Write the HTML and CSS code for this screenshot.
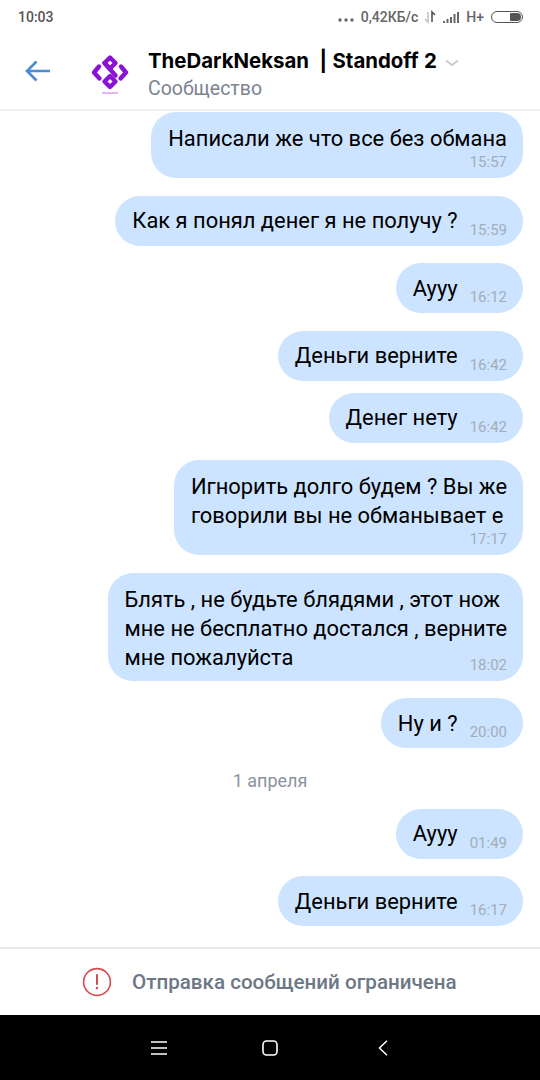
FILE: index.html
```html
<!DOCTYPE html>
<html lang="ru">
<head>
    <meta charset="UTF-8">
    <meta name="viewport" content="width=device-width, initial-scale=1.0">
    <title>TheDarkNeksan | Standoff 2</title>
    <link rel="stylesheet" href="styles.css">
</head>
<body>
    <div class="phone">
        <div class="status-bar">
            <span class="clock">10:03</span>
            <div class="status-right">
                <svg class="dots" width="16" height="4" viewBox="0 0 16 4">
                    <circle cx="2" cy="2" r="1.700" fill="#666"/>
                    <circle cx="8" cy="2" r="1.700" fill="#666"/>
                    <circle cx="14" cy="2" r="1.700" fill="#666"/>
                </svg>
                <span>0,42КБ/с</span>
                <svg class="traffic" width="13" height="14" viewBox="0 0 13 14">
                    <path d="M4 2v10L1 9" fill="none" stroke="#c4c4c4" stroke-width="1.600"/>
                    <path d="M8 12V2l3 3" fill="none" stroke="#555" stroke-width="1.600"/>
                </svg>
                <svg class="signal" width="18" height="12" viewBox="0 0 18 12">
                    <rect x="0" y="10" width="2" height="2" fill="#666"/>
                    <rect x="3.500" y="8" width="2" height="4" fill="#666"/>
                    <rect x="7" y="6" width="2" height="6" fill="#666"/>
                    <rect x="10.500" y="3" width="2" height="9" fill="#666"/>
                    <rect x="14" y="1" width="2" height="11" fill="#666"/>
                </svg>
                <span class="net">H+</span>
                <div class="battery"><div class="battery-fill"></div></div>
            </div>
        </div>

        <div class="header">
            <svg class="back" width="26" height="22" viewBox="0 0 26 22">
                <path d="M25 11H2M11.500 1.500L2 11l9.500 9.500" fill="none" stroke="#4a8bd4" stroke-width="2.600"/>
            </svg>
            <svg class="logo" width="44" height="44" viewBox="0 0 44 44">
                <g fill="none" stroke="#8a12d6" stroke-width="4.400" stroke-linejoin="round" stroke-linecap="round">
                    <path d="M22 6.500l5.500 5.500-5.500 5.500-5.500-5.500z"/>
                    <path d="M22 25l5.500 5.500-5.500 5.500-5.500-5.500z"/>
                    <path d="M16.500 12L27.500 24.500"/>
                    <path d="M11 15.500L6 21.500l5.500 6"/>
                    <path d="M33 15.500l5 6-5.500 6"/>
                </g>
                <path d="M14 42h16" stroke="#c86fe8" stroke-width="1"/>
            </svg>
            <div class="title-block">
                <div class="title-row">
                    <span class="title">TheDarkNeksan&nbsp; | Standoff 2</span>
                    <svg class="chevron" width="14" height="8" viewBox="0 0 14 8">
                        <path d="M1 1.500l6 4.500 6-4.500" fill="none" stroke="#c5cad1" stroke-width="1.800"/>
                    </svg>
                </div>
                <div class="subtitle">Сообщество</div>
            </div>
        </div>

        <div class="messages">
            <div class="bubble stacked">
                <div class="text">Написали же что все без обмана</div>
                <div class="time">15:57</div>
            </div>
            <div class="bubble">
                <div class="text">Как я понял денег я не получу ?</div>
                <div class="time">15:59</div>
            </div>
            <div class="bubble">
                <div class="text">Аууу</div>
                <div class="time">16:12</div>
            </div>
            <div class="bubble">
                <div class="text">Деньги верните</div>
                <div class="time">16:42</div>
            </div>
            <div class="bubble grouped">
                <div class="text">Денег нету</div>
                <div class="time">16:42</div>
            </div>
            <div class="bubble stacked">
                <div class="text">Игнорить долго будем ? Вы же<br>говорили вы не обманывает е</div>
                <div class="time">17:17</div>
            </div>
            <div class="bubble stacked">
                <div class="text">Блять , не будьте блядями , этот нож<br>мне не бесплатно достался , верните<br>мне пожалуйста</div>
                <div class="time time-inline">18:02</div>
            </div>
            <div class="bubble">
                <div class="text">Ну и ?</div>
                <div class="time">20:00</div>
            </div>
            <div class="date">1 апреля</div>
            <div class="bubble">
                <div class="text">Аууу</div>
                <div class="time">01:49</div>
            </div>
            <div class="bubble">
                <div class="text">Деньги верните</div>
                <div class="time">16:17</div>
            </div>
        </div>

        <div class="footer">
            <svg class="warn" width="30" height="30" viewBox="0 0 30 30">
                <circle cx="15" cy="15" r="13.400" fill="none" stroke="#d9484d" stroke-width="1.600"/>
                <path d="M15 8v9" stroke="#d9484d" stroke-width="2" stroke-linecap="round"/>
                <circle cx="15" cy="21" r="1.200" fill="#d9484d"/>
            </svg>
            <span>Отправка сообщений ограничена</span>
        </div>

        <div class="nav-bar">
            <svg width="16" height="14" viewBox="0 0 16 14">
                <path d="M0 1h16M0 7h16M0 13h16" stroke="#fff" stroke-width="1.500"/>
            </svg>
            <svg class="nav-home" width="16" height="16" viewBox="0 0 16 16">
                <rect x="1" y="1" width="14" height="14" rx="3.500" fill="none" stroke="#fff" stroke-width="1.600"/>
            </svg>
            <svg width="10" height="16" viewBox="0 0 10 16">
                <path d="M9 .8L1.500 8 9 15.200" fill="none" stroke="#fff" stroke-width="1.500"/>
            </svg>
        </div>
    </div>
</body>
</html>
```

FILE: styles.css
```css
* {
    margin: 0;
    padding: 0;
    box-sizing: border-box;
}

body {
    background-color: #fff;
    color: #000;
    font-family: Roboto, "Liberation Sans", sans-serif;
}

.phone {
    width: 540px;
    height: 1080px;
    display: flex;
    flex-direction: column;
    overflow: hidden;
}

.status-bar {
    height: 32px;
    padding: 2px 17px 0 18px;
    display: flex;
    justify-content: space-between;
    align-items: center;
    color: #555;
    font-size: 14px;
    font-weight: 500;
}

.status-right {
    display: flex;
    align-items: center;
    gap: 7px;
    color: #666;
}

.dots {
    margin-top: 6px;
}

.traffic {
    margin-left: -1px;
}

.signal {
    margin-left: -1px;
}

.net {
    margin-left: -2px;
}

.battery {
    width: 32px;
    height: 12px;
    border: 1px solid #555;
    border-radius: 6px;
    padding: 1px;
    display: flex;
    justify-content: flex-end;
}

.battery-fill {
    width: 11px;
    background: #555;
    border-radius: 1px 4px 4px 1px;
}

.header {
    height: 79px;
    padding: 0 0 0 25px;
    display: flex;
    align-items: center;
    border-bottom: 2px solid #f0f1f3;
}

.logo {
    margin-left: 37px;
    margin-top: 5px;
}

.title-block {
    margin-left: 16px;
    margin-top: 9px;
}

.title-row {
    display: flex;
    align-items: center;
    gap: 8px;
}

.title {
    font-family: Inter, sans-serif;
    font-size: 20.400px;
    font-weight: 700;
    line-height: 28px;
    word-spacing: 0.500px;
    white-space: pre;
}

.chevron {
    margin-top: 4px;
}

.subtitle {
    color: #7b8490;
    font-size: 19.500px;
    line-height: 28px;
}

.messages {
    flex: 1;
    padding: 1px 17px 0 0;
    display: flex;
    flex-direction: column;
    align-items: flex-end;
}

.bubble {
    height: 50px;
    margin-top: 17.500px;
    padding: 0 16px 0 17px;
    display: flex;
    align-items: center;
    gap: 12px;
    background: #cce4ff;
    border-radius: 25px;
}

.bubble:first-child {
    margin-top: 0;
}

.bubble.grouped {
    margin-top: 12px;
}

.bubble.stacked {
    height: auto;
    padding-top: 12px;
    padding-bottom: 7px;
    display: block;
}

.text {
    font-size: 21.900px;
    line-height: 29px;
    white-space: nowrap;
}

.time {
    color: #a3adb8;
    font-size: 15px;
    line-height: 18px;
    margin-top: 18px;
}

.stacked .time {
    margin-top: 0;
    text-align: right;
}

.stacked .time-inline {
    margin-top: -16px;
}

.date {
    margin-top: 23px;
    align-self: center;
    margin-left: 17px;
    color: #8a939e;
    font-size: 18px;
    line-height: 20px;
}

.footer {
    height: 68px;
    border-top: 2px solid #e7e8ec;
    padding-left: 82px;
    display: flex;
    align-items: center;
    gap: 20px;
    color: #6d7885;
    font-size: 20.600px;
    font-weight: 500;
}

.nav-bar {
    height: 65px;
    background: #000;
    padding-left: 151px;
    display: flex;
    align-items: center;
}

.nav-home {
    margin: 0 100px 0 95px;
}
```
